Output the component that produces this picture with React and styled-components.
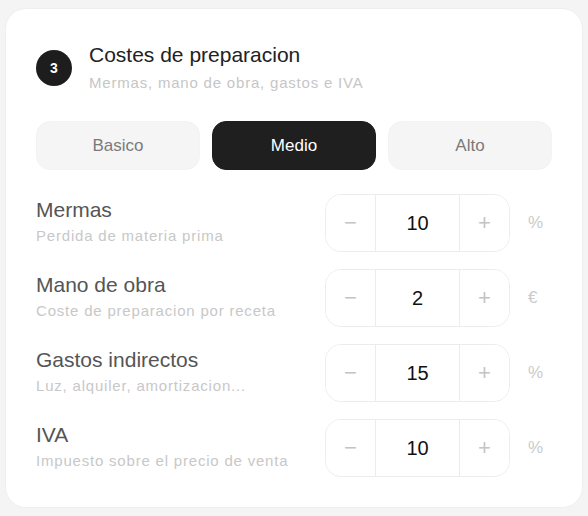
import React, { useState } from "react";
import styled, { createGlobalStyle } from "styled-components";

const GlobalStyle = createGlobalStyle`
  html, body {
    margin: 0;
    padding: 0;
    background: #f4f4f4;
  }
  body {
    font-family: "Liberation Sans", Arial, sans-serif;
    -webkit-font-smoothing: antialiased;
  }
`;

const Page = styled.div`
  padding: 9px 6px 8px;
`;

const Card = styled.section`
  background: #fff;
  border-radius: 20px;
  padding: 34px 30px 31px;
  box-shadow: 0 0 0 1px #efefef;
`;

const Header = styled.header`
  display: flex;
  align-items: center;
  gap: 17px;
`;

const Badge = styled.div`
  width: 36px;
  height: 36px;
  border-radius: 50%;
  background: #1d1d1d;
  color: #fff;
  font-size: 14px;
  font-weight: 700;
  display: flex;
  align-items: center;
  justify-content: center;
  flex-shrink: 0;
`;

const HeadText = styled.div`
  display: flex;
  flex-direction: column;
  gap: 7px;
`;

const Title = styled.h2`
  margin: 0;
  font-size: 21px;
  font-weight: 400;
  color: #222;
  line-height: 24px;
`;

const Sub = styled.p`
  margin: 0;
  font-size: 15px;
  line-height: 18px;
  letter-spacing: 0.8px;
  color: #c6c6c6;
`;

const Tabs = styled.div`
  display: grid;
  grid-template-columns: repeat(3, 1fr);
  gap: 12px;
  margin-top: 29px;
`;

const Tab = styled.button`
  height: 49px;
  border-radius: 14px;
  border: 1px solid ${(p) => (p.$active ? "#1d1d1d" : "#f3f3f3")};
  background: ${(p) => (p.$active ? "#1f1f1f" : "#f5f5f5")};
  color: ${(p) => (p.$active ? "#fff" : "#7a7a7a")};
  font-family: inherit;
  font-size: 17px;
  cursor: pointer;
`;

const Rows = styled.div`
  display: flex;
  flex-direction: column;
  gap: 19px;
  margin-top: 25px;
`;

const Row = styled.div`
  display: flex;
  align-items: center;
  justify-content: space-between;
  height: 56px;
`;

const Label = styled.div`
  display: flex;
  flex-direction: column;
  gap: 5px;
  margin-top: -3px;
`;

const Name = styled.div`
  font-size: 21px;
  line-height: 24px;
  color: #555;
`;

const Hint = styled.div`
  font-size: 15px;
  line-height: 18px;
  letter-spacing: 0.8px;
  color: #c8c8c8;
`;

const Control = styled.div`
  display: flex;
  align-items: center;
  gap: 18px;
`;

const Stepper = styled.div`
  display: grid;
  grid-template-columns: 50px 83px 50px;
  height: 56px;
  border: 1px solid #ececec;
  border-radius: 16px;
  overflow: hidden;
`;

const StepBtn = styled.button`
  border: none;
  background: #fff;
  color: #c4c4c4;
  font-family: inherit;
  font-size: 22px;
  font-weight: 300;
  cursor: pointer;
  padding: 0;
  ${(p) => (p.$side === "left" ? "border-right: 1px solid #ececec;" : "border-left: 1px solid #ececec;")}
`;

const Value = styled.div`
  display: flex;
  align-items: center;
  justify-content: center;
  font-size: 20px;
  color: #111;
`;

const Unit = styled.span`
  width: 24px;
  font-size: 17px;
  color: #cbcbcb;
`;

const levels = ["Basico", "Medio", "Alto"];

const items = [
  { name: "Mermas", hint: "Perdida de materia prima", value: 10, unit: "%" },
  { name: "Mano de obra", hint: "Coste de preparacion por receta", value: 2, unit: "€" },
  { name: "Gastos indirectos", hint: "Luz, alquiler, amortizacion...", value: 15, unit: "%" },
  { name: "IVA", hint: "Impuesto sobre el precio de venta", value: 10, unit: "%" },
];

export default function App() {
  const [level, setLevel] = useState("Medio");
  const [values, setValues] = useState(items.map((i) => i.value));

  const change = (idx, d) =>
    setValues((v) => v.map((x, i) => (i === idx ? Math.max(0, x + d) : x)));

  return (
    <>
      <GlobalStyle />
      <Page>
        <Card>
          <Header>
            <Badge>3</Badge>
            <HeadText>
              <Title>Costes de preparacion</Title>
              <Sub>Mermas, mano de obra, gastos e IVA</Sub>
            </HeadText>
          </Header>
          <Tabs>
            {levels.map((l) => (
              <Tab key={l} $active={l === level} onClick={() => setLevel(l)}>
                {l}
              </Tab>
            ))}
          </Tabs>
          <Rows>
            {items.map((it, i) => (
              <Row key={it.name}>
                <Label>
                  <Name>{it.name}</Name>
                  <Hint>{it.hint}</Hint>
                </Label>
                <Control>
                  <Stepper>
                    <StepBtn $side="left" onClick={() => change(i, -1)}>
                      −
                    </StepBtn>
                    <Value>{values[i]}</Value>
                    <StepBtn $side="right" onClick={() => change(i, 1)}>
                      +
                    </StepBtn>
                  </Stepper>
                  <Unit>{it.unit}</Unit>
                </Control>
              </Row>
            ))}
          </Rows>
        </Card>
      </Page>
    </>
  );
}
